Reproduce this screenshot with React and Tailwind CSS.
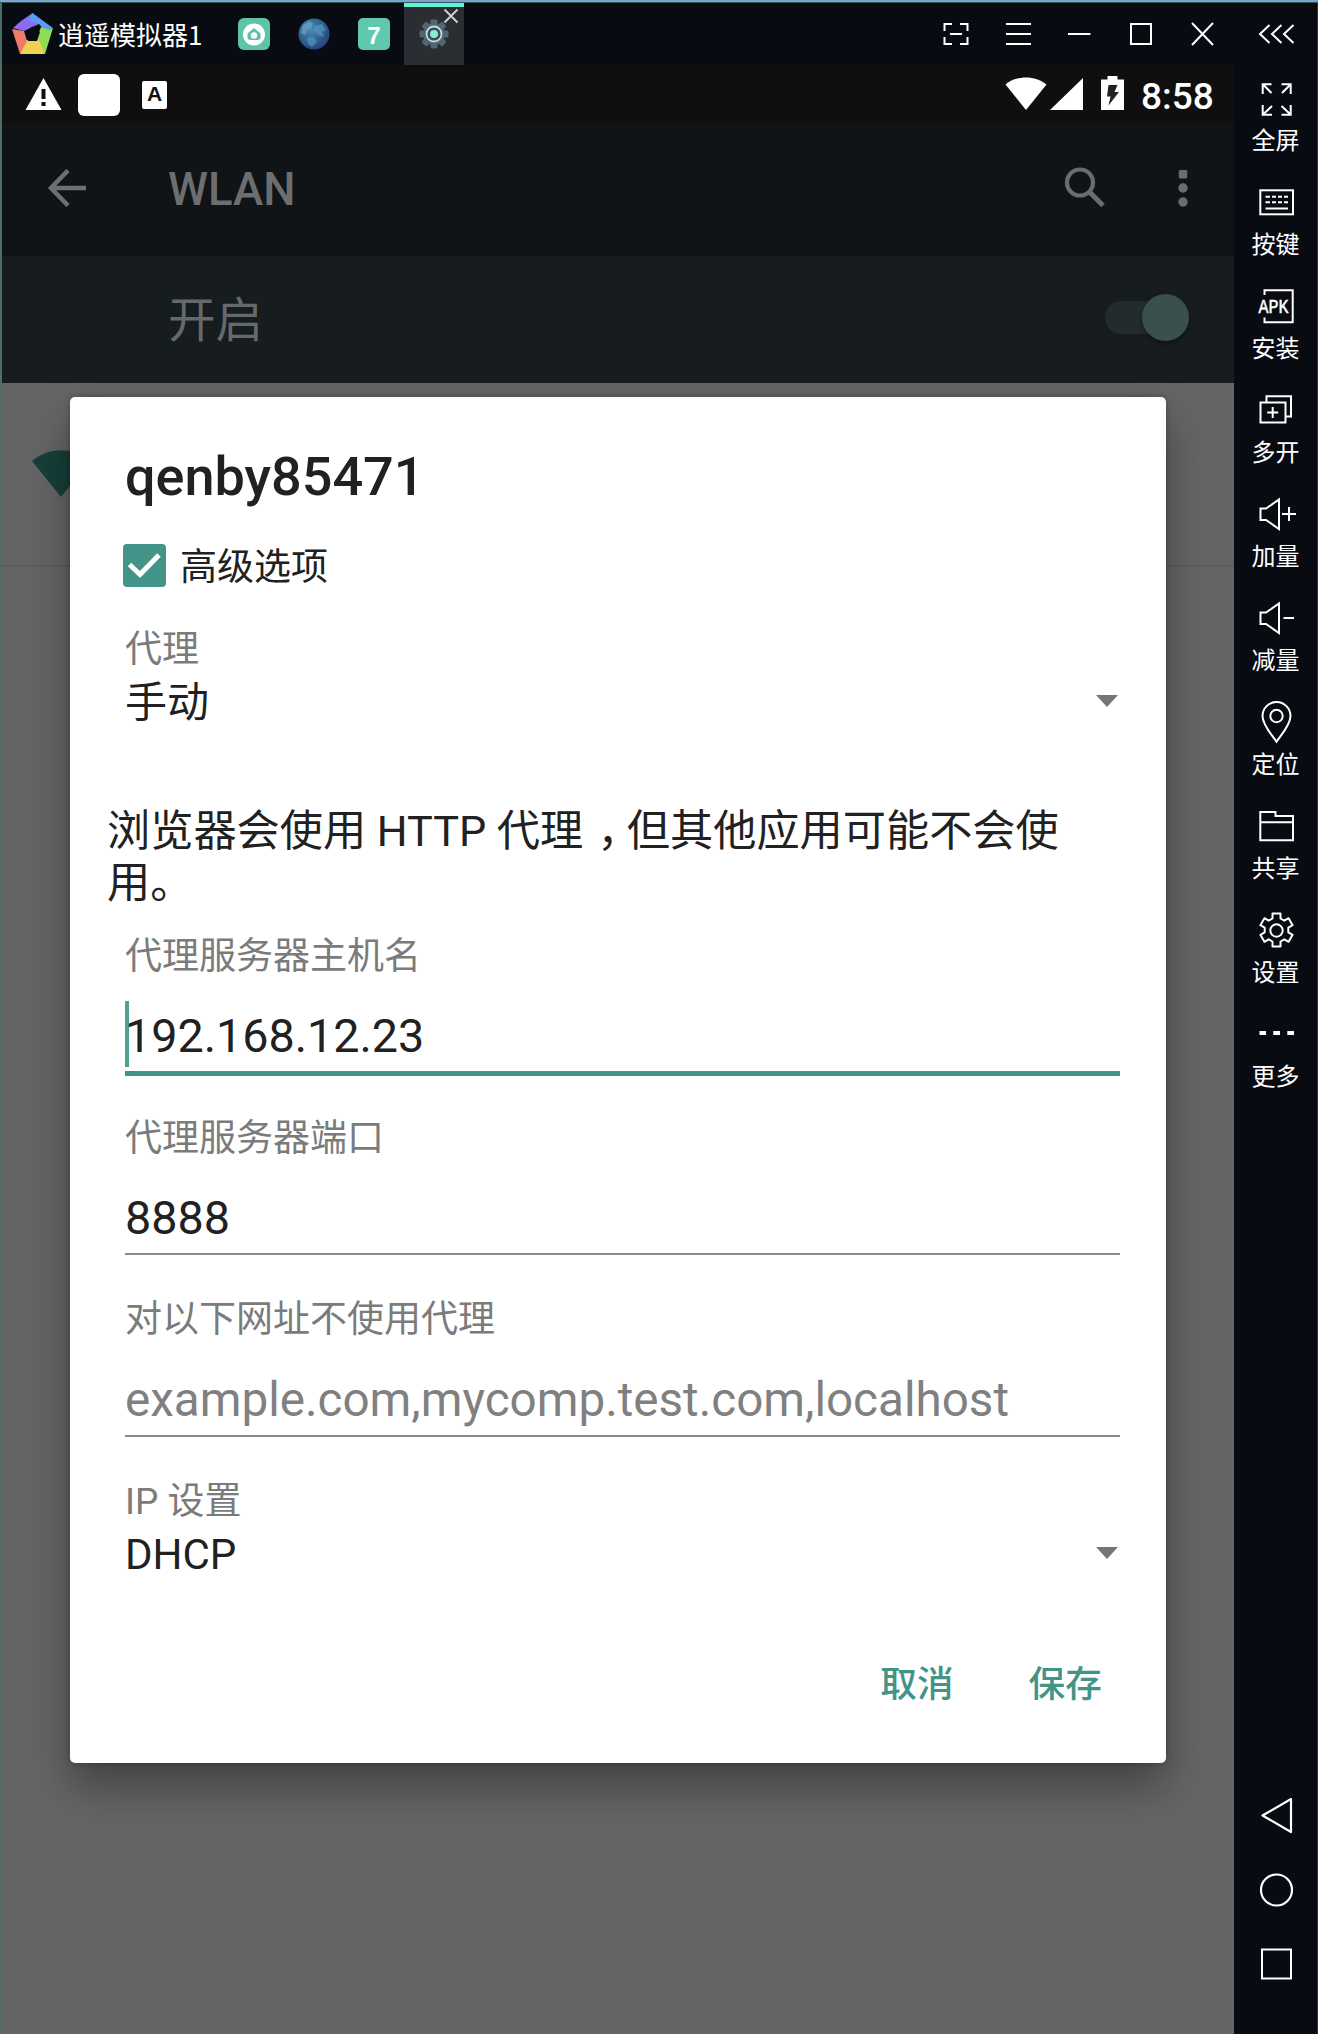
import React from "react";

const SANS = "font-[Roboto,'Noto_Sans_CJK_SC',sans-serif]";
const CJK = "font-['Noto_Sans_CJK_SC',sans-serif]";

function Logo() {
  return (
    <svg width="42" height="42" viewBox="0 0 42 42">
      <path d="M20.500 0L9 8L1 15L12 18L27 11Z" fill="#8b6cf0" />
      <path d="M20.500 0L41 15L34 19L27 11L16 7Z" fill="#5b9cf5" />
      <path d="M41 15L33 41L24 27L29 14L37 17Z" fill="#8fdc55" />
      <path d="M33 41H8L13 27L27 27Z" fill="#f0d155" />
      <path d="M8 41L0 16L12 18L15 28Z" fill="#ee7a68" />
      <path d="M20.500 13.500L28 19L25 28H16L13 19Z" fill="#080b12" />
    </svg>
  );
}

function StoreIcon() {
  return (
    <svg width="32" height="32" viewBox="0 0 32 32">
      <rect width="32" height="32" rx="6" fill="#5fc3a8" />
      <circle cx="16" cy="16.500" r="11" fill="#fff" />
      <path d="M16 10L22.500 15.500V19a3 3 0 0 1-3 3h-7a3 3 0 0 1-3-3V15.500Z" fill="#62bfa6" />
      <circle cx="16" cy="17.500" r="3.200" fill="#fff" />
    </svg>
  );
}

function Globe() {
  return (
    <svg width="32" height="32" viewBox="0 0 32 32">
      <defs>
        <radialGradient id="globe" cx="0.4" cy="0.35" r="0.7">
          <stop offset="0" stopColor="#4c8cb8" />
          <stop offset="0.6" stopColor="#2c618f" />
          <stop offset="1" stopColor="#263e78" />
        </radialGradient>
      </defs>
      <circle cx="16" cy="16" r="15.500" fill="url(#globe)" />
      <path d="M5 7L11 3L15 5L13 10L9 12L7 17L3 15Z" fill="#6ea6c6" opacity=".7" />
      <path d="M17 8L24 6L28 12L24 14L26 19L20 17L16 13Z" fill="#5b93bb" opacity=".7" />
      <path d="M9 20L16 19L19 24L14 29L10 26Z" fill="#5b9abf" opacity=".6" />
    </svg>
  );
}

function TabGear() {
  return (
    <svg width="30" height="30" viewBox="-15 -15 30 30">
      <g fill="#536472">
        {[0, 45, 90, 135].map((a) => (
          <rect key={a} x="-3.500" y="-14.500" width="7" height="29" rx="1.500" transform={`rotate(${a})`} />
        ))}
        <circle r="11" />
      </g>
      <circle r="7.500" fill="#35505a" stroke="#c9dcdc" strokeWidth="1.800" />
      <circle r="4" fill="#86ecd2" />
    </svg>
  );
}

function TitleBar() {
  return (
    <div className="flex h-[62px] w-[1232px] bg-[#080b12]">
      <div className="flex w-[236px] items-center pl-[10px]">
        <Logo />
        <span className={`ml-[4px] whitespace-nowrap text-[26px] leading-[34px] text-white ${CJK}`}>
          逍遥模拟器1
        </span>
      </div>
      <div className="flex items-center gap-[28px]">
        <StoreIcon />
        <Globe />
        <span className="flex h-[32px] w-[32px] items-center justify-center rounded-[5px] bg-[#5fc8ae] pt-[3px] font-['Liberation_Sans',sans-serif] text-[24px] font-bold leading-none text-white">
          7
        </span>
      </div>
      <div className="relative ml-[14px] flex w-[60px] items-center justify-center border-t-4 border-[#5ff5d4] bg-[#2a2d31] pb-[4px]">
        <TabGear />
        <svg className="absolute right-[5px] top-[1px]" width="16" height="16" viewBox="0 0 16 16">
          <path d="M1.500 1.500L14.500 14.500M14.500 1.500L1.500 14.500" stroke="#d4d4d4" strokeWidth="1.800" />
        </svg>
      </div>
      <div className="ml-auto flex items-center gap-[37px] pr-[20px]">
        <svg width="26" height="24" viewBox="0 0 26 24" fill="none" stroke="#fff" strokeWidth="2">
          <path d="M1.500 9V2H9M17 2H24.500V9M24.500 15V22H17M9 22H1.500V15M7 12H19" />
        </svg>
        <svg width="25" height="24" viewBox="0 0 25 24" stroke="#fff" strokeWidth="2">
          <path d="M0 2H25M0 12H25M0 22H25" />
        </svg>
        <svg width="24" height="24" viewBox="0 0 24 24" stroke="#fff" strokeWidth="2">
          <path d="M0 12H22.500" />
        </svg>
        <svg width="24" height="24" viewBox="0 0 24 24" fill="none" stroke="#fff" strokeWidth="2">
          <rect x="2" y="2" width="20" height="20" />
        </svg>
        <svg width="24" height="24" viewBox="0 0 24 24" stroke="#fff" strokeWidth="2">
          <path d="M2 1L23 23M23 1L2 23" />
        </svg>
      </div>
    </div>
  );
}

function StatusBar() {
  return (
    <div className="flex h-[58px] items-start bg-[#0f0f10] pl-[23px] pr-[20px] pt-[9px]">
      <svg className="mt-[4px]" width="37" height="32" viewBox="0 0 37 32">
        <path d="M18.500 0L36.500 32H0.500Z" fill="#fff" />
        <path d="M16.500 11h4v10h-4zM16.500 24h4v4h-4z" fill="#0f0f10" />
      </svg>
      <div className="ml-[16px] h-[42px] w-[42px] rounded-[6px] bg-white" />
      <div className="ml-[22px] mt-[7px] flex h-[28px] w-[25px] justify-center rounded-[2px] bg-white font-['Liberation_Sans',sans-serif] text-[21px] font-bold leading-[26px] text-[#111]">
        A
      </div>
      <div className="ml-auto flex">
        <svg className="mt-[3px]" width="42" height="33" viewBox="0 0 42 33">
          <path d="M21 33L0.500 7.500C12 -2 30 -2 41.500 7.500Z" fill="#fff" />
        </svg>
        <svg className="ml-[3px] mt-[4px]" width="33" height="32" viewBox="0 0 33 32">
          <path d="M33 0V32H0Z" fill="#fff" />
        </svg>
        <svg className="ml-[18px] mt-[2px]" width="23" height="34" viewBox="0 0 23 34">
          <path d="M6.500 0h10v3.500h6.500V34H0V3.500h6.500z" fill="#fff" />
          <path d="M7.500 9H16.500L13.500 16H18L7.500 29.500L9.500 20.500H6Z" fill="#222" />
        </svg>
        <span className="ml-[17px] w-[73px] whitespace-nowrap text-[37px] font-medium leading-[46px] text-white">8:58</span>
      </div>
    </div>
  );
}

function AppBar() {
  return (
    <div className="flex h-[133px] items-center bg-[#101416] pl-[45px] pr-[46px]">
      <svg className="-mt-[3px]" width="40" height="38" viewBox="0 0 40 38" fill="none" stroke="#6d6f70" strokeWidth="4.500">
        <path d="M21 1.500L4 19L21 36.500M4 19H39" />
      </svg>
      <span className="ml-[81px] text-[45.500px] font-medium leading-[60px] text-[#6c6e6f]">WLAN</span>
      <svg className="-mt-[3px] ml-auto" width="42" height="42" viewBox="0 0 42 42" fill="none" stroke="#6a6c6d">
        <circle cx="16" cy="15.500" r="13" strokeWidth="4.200" />
        <path d="M25 24.500L39 38.500" strokeWidth="5" />
      </svg>
      <svg className="-mt-[3px] ml-[72px]" width="10" height="38" viewBox="0 0 10 38" fill="#6a6c6d">
        <rect x="0.800" y="1" width="8.500" height="8.500" rx="1.500" />
        <circle cx="5" cy="19" r="4.700" />
        <circle cx="5" cy="33" r="4.700" />
      </svg>
    </div>
  );
}

function SwitchRow() {
  return (
    <div className="flex h-[127px] items-center bg-[#171c1f] pl-[166px] pr-[45px]">
      <span className="pt-[2px] text-[47.500px] leading-[60px] text-[#65696b]">开启</span>
      <div className="-mt-[5px] ml-auto flex h-[48px] w-[84px] items-center">
        <div className="h-[33px] w-[72px] shrink-0 rounded-full bg-[#222c2d]" />
        <div className="-ml-[35px] h-[47px] w-[47px] shrink-0 rounded-full bg-[#3a504d] shadow-[0_2px_4px_rgba(0,0,0,0.4)]" />
      </div>
    </div>
  );
}

function Caret() {
  return (
    <svg className="-mt-[4px] mr-[2px]" width="22" height="12" viewBox="0 0 22 12">
      <path d="M0 0H22L11 12Z" fill="#757575" />
    </svg>
  );
}

function Label({ className = "", children }) {
  return <div className={`text-[37px] leading-[46px] text-[#7b7b7b] ${className}`}>{children}</div>;
}

function Select({ children }) {
  return (
    <div className="flex h-[60px] items-center justify-between text-[42px] leading-[60px] text-[#212121]">
      <span>{children}</span>
      <Caret />
    </div>
  );
}

function Dialog() {
  return (
    <div className="absolute left-[68px] top-[332px] flex h-[1366px] w-[1096px] flex-col rounded-[5px] bg-white pl-[55px] pr-[46px] pt-[48px] shadow-[0_24px_44px_rgba(0,0,0,0.34),0_0_6px_rgba(0,0,0,0.25)]">
      <h1 className="text-[54px] font-medium leading-[64px] text-[#212121]">qenby85471</h1>
      <div className="-ml-[2px] mt-[35px] flex h-[43px] items-center">
        <svg width="43" height="43" viewBox="0 0 43 43">
          <rect width="43" height="43" rx="4" fill="#429488" />
          <path d="M6.500 20.500L17 30.500L36 11" fill="none" stroke="#fff" strokeWidth="5" />
        </svg>
        <span className="ml-[14px] pt-[5px] text-[37px] leading-[46px] text-[#212121]">高级选项</span>
      </div>
      <Label className="mt-[40px]">代理</Label>
      <Select>手动</Select>
      <p className="-ml-[18px] mt-[73px] h-[105px] text-[43.200px] leading-[51.500px] text-[#212121]">
        浏览器会使用 HTTP 代理
        <span className="ml-[14px] mr-[8px] [font-feature-settings:'halt']">，</span>
        但其他应用可能不会使
        <br />
        用。
      </p>
      <Label className="mt-[23px]">代理服务器主机名</Label>
      <div className="relative h-[96px] border-b-[5px] border-[#429488] pt-[26px] text-[46.700px] leading-[60px] text-[#212121]">
        <div className="absolute left-0 top-[21px] h-[66px] w-[4px] bg-[#4ba295]" />
        <span className="relative">192.168.12.23</span>
      </div>
      <Label className="mt-[40px]">代理服务器端口</Label>
      <div className="h-[93px] border-b-2 border-[#8a8a8a] pt-[26px] text-[46.700px] leading-[60px] text-[#212121]">8888</div>
      <Label className="mt-[42px]">对以下网址不使用代理</Label>
      <div className="h-[94px] border-b-2 border-[#8a8a8a] pt-[27px] text-[47.600px] leading-[60px] text-[#808080]">
        example.com,mycomp.test.com,localhost
      </div>
      <Label className="mt-[42px]">IP 设置</Label>
      <Select>DHCP</Select>
      <div className="mt-[70px] flex justify-end gap-[75px] pr-[18px] text-[36.700px] font-medium leading-[60px] text-[#429488]">
        <span>取消</span>
        <span>保存</span>
      </div>
    </div>
  );
}

function Phone() {
  return (
    <div className={`relative flex w-[1232px] grow flex-col bg-[#656565] ${SANS}`}>
      <StatusBar />
      <AppBar />
      <SwitchRow />
      <div className="h-[184px] border-b-2 border-[#5c5c5c] pl-[30px] pt-[67px]">
        <svg width="58" height="47" viewBox="0 0 58 47">
          <path d="M29 47L0 11C17 -3.500 41 -3.500 58 11Z" fill="#173f39" />
        </svg>
      </div>
      <Dialog />
    </div>
  );
}

const GEAR =
  "M20.5 6.500h8v5l3.800 2.200 4.300-2.500 4 7-4.300 2.500v4.600l4.300 2.500-4 7-4.300-2.500-3.800 2.200v5h-8v-5l-3.800-2.200-4.300 2.500-4-7 4.300-2.500v-4.600l-4.300-2.500 4-7 4.300 2.500 3.800-2.200z";

const SPEAKER = "M8.500 17.500H14L27 8.500V38L14 29H8.500Z";

const tools = [
  {
    label: "全屏",
    icon: <path d="M10.700 19V9.300H19.500M11 9.500L19.500 18M29.500 9.300H38.700V19M38.500 9.500L30 18M10.700 30V39.700H20M11 39.500L20 31M29.500 39.700H38.700V30M38.500 39.500L29.500 31" />,
  },
  {
    label: "按键",
    icon: (
      <>
        <rect x="8.300" y="11.300" width="32.700" height="24" />
        <path d="M13.500 17.700H18M20 17.700H24M26 17.700H30M32 17.700H36M13.500 23.300H18M20 23.300H24M26 23.300H30M32 23.300H36M13.500 29.500H36" />
      </>
    ),
  },
  {
    label: "安装",
    icon: (
      <>
        <path d="M12.500 12V7.300H40.700V39.300H12.500V34.500" />
        <text x="6.500" y="30.300" textLength="30" lengthAdjust="spacingAndGlyphs" fill="#fff" stroke="#fff" strokeWidth="0.500" className="font-['Liberation_Mono',monospace] text-[21px]">
          APK
        </text>
      </>
    ),
  },
  {
    label: "多开",
    icon: (
      <>
        <rect x="8.500" y="15.500" width="25" height="20" />
        <path d="M14.500 15V9.300H39V29.500H34M20.700 20V31M15.200 25.500H26.200" />
      </>
    ),
  },
  { label: "加量", icon: <path d={SPEAKER + "M37 16V30M30 23H44"} /> },
  { label: "减量", icon: <path d={SPEAKER + "M31.500 23H42"} /> },
  {
    label: "定位",
    icon: (
      <>
        <path d="M24.500 42.800C20 36 10.500 26 10.500 17A14 14 0 0 1 38.500 17C38.500 26 29 36 24.500 42.800Z" />
        <circle cx="24.500" cy="17" r="6.200" />
      </>
    ),
  },
  { label: "共享", icon: <path d="M8.300 9H23.500V13H41V37.300H8.300ZM8.300 19.300H41" /> },
  {
    label: "设置",
    icon: (
      <>
        <path d={GEAR} strokeLinejoin="round" />
        <circle cx="24.500" cy="23.500" r="6.200" />
      </>
    ),
  },
  { label: "更多", icon: <path d="M7.500 22H14M21.300 22H28M35.300 22H42" strokeWidth="4" /> },
];

function Sidebar() {
  return (
    <aside className="flex w-[83px] flex-col items-center bg-[#080b12]">
      <svg className="mt-[20px]" width="38" height="22" viewBox="0 0 38 22" fill="none" stroke="#fff" strokeWidth="2">
        <path d="M12.500 2L3 11L12.500 20M24.500 2L15 11L24.500 20M36.500 2L27 11L36.500 20" />
      </svg>
      <div className="mt-[30px] flex flex-col gap-[22px]">
        {tools.map((t) => (
          <div key={t.label} className="flex h-[82px] flex-col items-center">
            <svg width="48" height="48" viewBox="0 0 48 48" fill="none" stroke="#fff" strokeWidth="2">
              {t.icon}
            </svg>
            <span className={`whitespace-nowrap text-[24px] leading-[32px] text-white ${CJK}`}>{t.label}</span>
          </div>
        ))}
      </div>
      <div className="mt-auto flex flex-col items-center gap-[38px] pb-[52px]">
        <svg width="36" height="37" viewBox="0 0 36 37" fill="none" stroke="#fff" strokeWidth="2.200">
          <path d="M33 2L4.500 18.500L33 35Z" strokeLinejoin="round" />
        </svg>
        <svg width="36" height="36" viewBox="0 0 36 36" fill="none" stroke="#fff" strokeWidth="2.200">
          <circle cx="18.500" cy="18" r="15.500" />
        </svg>
        <svg width="36" height="36" viewBox="0 0 36 36" fill="none" stroke="#fff" strokeWidth="2">
          <rect x="4" y="3.500" width="29" height="29" />
        </svg>
      </div>
    </aside>
  );
}

export default function App() {
  return (
    <div className="flex h-[2034px] w-[1318px] flex-col overflow-hidden bg-[#080b12]">
      <div className="h-[2px] bg-[#7ba4d6]" />
      <div className="h-px bg-[#35574f]" />
      <div className="flex grow border-l-2 border-r border-l-[#4a6f69] border-r-[#26383c]">
        <div className="flex flex-col">
          <TitleBar />
          <Phone />
        </div>
        <Sidebar />
      </div>
    </div>
  );
}
